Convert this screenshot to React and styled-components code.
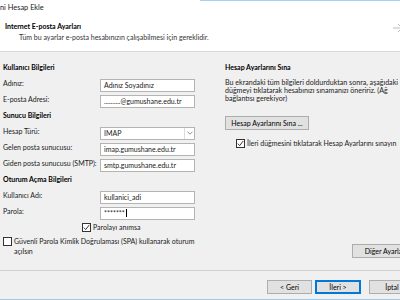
import styled, { createGlobalStyle } from 'styled-components';

const GlobalStyle = createGlobalStyle`
  html, body {
    margin: 0;
    padding: 0;
    background: #f0f0f0;
  }

  body {
    font-family: Lato, "Noto Sans", "Liberation Sans", sans-serif;
    font-size: 7px;
    color: #1a1a1a;
  }
`;

const Frame = styled.div`
  width: 400px;
  height: 300px;
  overflow: hidden;
  background: #f0f0f0;
`;

const Dialog = styled.div`
  width: 432px;
  height: 300px;
  display: flex;
  flex-direction: column;
`;

const Header = styled.header`
  height: 51px;
  flex-shrink: 0;
  background: linear-gradient(#a8d1f2, #a8d1f2) 200px 0 / 100% 1px no-repeat, #fff;
  border-bottom: 1px solid #d9d9d9;
  position: relative;

  & > .title {
    padding: 3px 0 0 0;
    height: 10px;
    line-height: 10px;
    font-size: 7.4px;
  }

  & > .heading {
    margin: 8px 0 0 5px;
    line-height: 10px;
    font-weight: 700;
    color: #000;
  }

  & > .sub {
    margin: 1px 0 0 19px;
    line-height: 10px;
    color: #333;
    white-space: nowrap;
  }

  & > .arrow {
    position: absolute;
    left: 392px;
    top: 22px;
  }
`;

const Body = styled.main`
  flex: 1;
  display: flex;
  min-height: 0;
`;

const LeftColumn = styled.section`
  width: 197px;
  padding: 9px 0 0 3px;
  display: flex;
  flex-direction: column;
`;

const RightColumn = styled.section`
  flex: 1;
  padding: 9px 8px 12px 25px;
  display: flex;
  flex-direction: column;
  align-items: flex-start;
`;

const SectionTitle = styled.h3`
  margin: 0;
  height: 16px;
  line-height: 13px;
  font-size: 7px;
  font-weight: 700;
  color: #000;
  white-space: nowrap;
`;

const FormRow = styled.div`
  display: grid;
  grid-template-columns: 97px 95px;
  height: 16px;
  align-items: center;

  & > label {
    align-self: start;
    line-height: 12px;
    white-space: nowrap;
  }
`;

const TextBox = styled.div`
  height: 11px;
  background: #fff;
  border: 1px solid #b4b4b4;
  padding-left: 3px;
  line-height: 11px;
  white-space: nowrap;
  overflow: hidden;
  display: flex;
  align-items: center;

  & > .caret {
    width: 1px;
    height: 8px;
    background: #000;
    margin-left: 1px;
  }
`;

const SelectBox = styled(TextBox)`
  padding-right: 0;
  justify-content: space-between;

  & > .drop {
    width: 9px;
    height: 11px;
    border-left: 1px solid #dcdcdc;
    display: flex;
    align-items: center;
    justify-content: center;
  }
`;

const CheckRow = styled.label`
  display: flex;
  align-items: flex-start;
  gap: 2px;
  line-height: 10px;
  white-space: nowrap;
  margin-left: ${({ $indent }) => $indent || 0}px;
  margin-top: ${({ $top }) => $top || 0}px;
`;

const Box = styled.span`
  width: 7px;
  height: 7px;
  margin-top: 1px;
  flex-shrink: 0;
  background: #fff;
  border: 1px solid #333;
  display: flex;
  align-items: center;
  justify-content: center;
`;

const Paragraph = styled.p`
  margin: 2px 0 0;
  line-height: 7.8px;
  color: #222;
  white-space: nowrap;
  font-size: 7.1px;
`;

const Button = styled.button`
  font: inherit;
  color: #000;
  height: 14px;
  padding: 0 4px;
  background: #e1e1e1;
  border: 1px solid ${({ $default }) => ($default ? '#0078d7' : '#adadad')};
  box-shadow: ${({ $default }) => ($default ? 'inset 0 0 0 1px #0078d7' : 'none')};
  width: ${({ $width }) => ($width ? `${$width}px` : 'auto')};
  flex-shrink: 0;
  line-height: 12px;
  white-space: nowrap;
`;

const Footer = styled.footer`
  height: 30px;
  flex-shrink: 0;
  border-top: 1px solid #d0d0d0;
  border-bottom: 1px solid #9fcbef;
  box-sizing: border-box;
  display: flex;
  align-items: flex-start;
  padding: 9px 0 0 267px;
  gap: 3px;

  & > .cancel {
    margin-left: 5px;
  }
`;

const Check = () => (
  <svg width="7" height="7" viewBox="0 0 7 7">
    <path d="M0.8 3.6 L2.7 5.6 L6.3 0.9" fill="none" stroke="#222" strokeWidth="0.9" />
  </svg>
);

const App = () => (
  <>
    <GlobalStyle />
    <Frame>
      <Dialog>
        <Header>
          <div className="title">ni Hesap Ekle</div>
          <div className="heading">Internet E-posta Ayarları</div>
          <div className="sub">Tüm bu ayarlar e-posta hesabınızın çalışabilmesi için gereklidir.</div>
          <svg className="arrow" width="12" height="12" viewBox="0 0 12 12">
            <path d="M1 6 H10 M6 2 L10 6 L6 10" fill="none" stroke="#bdbdbd" strokeWidth="1" />
          </svg>
        </Header>

        <Body>
          <LeftColumn>
            <SectionTitle>Kullanıcı Bilgileri</SectionTitle>
            <FormRow>
              <label>Adınız:</label>
              <TextBox>Adınız Soyadınız</TextBox>
            </FormRow>
            <FormRow>
              <label>E-posta Adresi:</label>
              <TextBox>..........@gumushane.edu.tr</TextBox>
            </FormRow>

            <SectionTitle>Sunucu Bilgileri</SectionTitle>
            <FormRow>
              <label>Hesap Türü:</label>
              <SelectBox>
                <span>IMAP</span>
                <span className="drop">
                  <svg width="6" height="4" viewBox="0 0 6 4">
                    <path d="M0.5 0.8 L3 3.2 L5.5 0.8" fill="none" stroke="#777" strokeWidth="0.8" />
                  </svg>
                </span>
              </SelectBox>
            </FormRow>
            <FormRow>
              <label>Gelen posta sunucusu:</label>
              <TextBox>imap.gumushane.edu.tr</TextBox>
            </FormRow>
            <FormRow>
              <label>Giden posta sunucusu (SMTP):</label>
              <TextBox>smtp.gumushane.edu.tr</TextBox>
            </FormRow>

            <SectionTitle>Oturum Açma Bilgileri</SectionTitle>
            <FormRow>
              <label>Kullanıcı Adı:</label>
              <TextBox>kullanici_adi</TextBox>
            </FormRow>
            <FormRow>
              <label>Parola:</label>
              <TextBox>
                *******
                <span className="caret" />
              </TextBox>
            </FormRow>

            <CheckRow $indent={79} $top={1}>
              <Box>
                <Check />
              </Box>
              Parolayı anımsa
            </CheckRow>
            <CheckRow $top={4}>
              <Box />
              <span>
                Güvenli Parola Kimlik Doğrulaması (SPA) kullanarak oturum
                <br />
                açılsın
              </span>
            </CheckRow>
          </LeftColumn>

          <RightColumn>
            <SectionTitle>Hesap Ayarlarını Sına</SectionTitle>
            <Paragraph>
              Bu ekrandaki tüm bilgileri doldurduktan sonra, aşağıdaki
              <br />
              düğmeyi tıklatarak hesabınızı sınamanızı öneririz. (Ağ
              <br />
              bağlantısı gerekiyor)
            </Paragraph>
            <Button style={{ marginTop: 14 }} $width={84}>
              Hesap Ayarlarını Sına ...
            </Button>
            <CheckRow $indent={11} $top={8}>
              <Box>
                <Check />
              </Box>
              İleri düğmesini tıklatarak Hesap Ayarlarını sınayın
            </CheckRow>
            <Button style={{ marginTop: 'auto', marginLeft: 127 }} $width={72}>
              Diğer Ayarlar ...
            </Button>
          </RightColumn>
        </Body>

        <Footer>
          <Button $width={45}>&lt; Geri</Button>
          <Button $width={46} $default>
            İleri &gt;
          </Button>
          <Button className="cancel" $width={46}>
            İptal
          </Button>
        </Footer>
      </Dialog>
    </Frame>
  </>
);

export default App;
